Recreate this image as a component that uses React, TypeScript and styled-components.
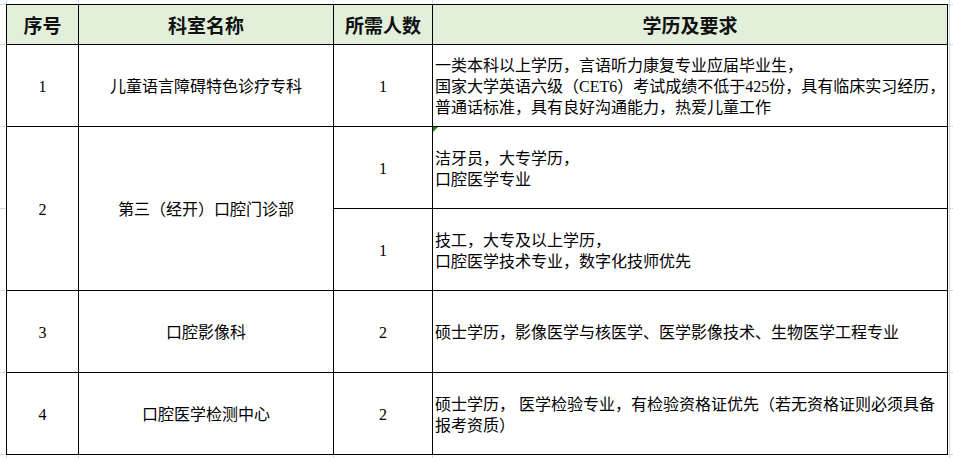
import React from 'react'
import styled, { createGlobalStyle } from 'styled-components'

const GlobalStyle = createGlobalStyle`
  html, body {
    margin: 0;
    padding: 0;
    background: #ffffff;
  }
`

const GRID = '#d0d7e5'
const hLines = [4, 44, 126, 208, 290, 372, 454]
const vLines = [6, 78, 333, 432, 949]

// faint spreadsheet gridlines that show around the bordered table
const sheetBackground = [
  ...hLines.map(y => `linear-gradient(${GRID}, ${GRID}) 0 ${y}px / 100% 1px no-repeat`),
  ...vLines.map(x => `linear-gradient(${GRID}, ${GRID}) ${x}px 0 / 1px 100% no-repeat`),
].join(', ')

const Sheet = styled.div`
  width: 953px;
  height: 458px;
  box-sizing: border-box;
  padding: 4px 0 0 6px;
  background: ${sheetBackground};
  overflow: hidden;
`

const Table = styled.div`
  display: grid;
  grid-template-columns: 71px 254px 98px 514px;
  grid-template-rows: 39px repeat(5, 81px);
  gap: 1px;
  width: fit-content;
  background: #000000;
  border: 1px solid #000000;
`

const HeadCell = styled.div`
  display: flex;
  align-items: center;
  justify-content: center;
  background: #e2efda;
  color: #111111;
  font-family: "Noto Sans CJK SC", sans-serif;
  font-weight: 700;
  font-size: 19px;
  padding-bottom: 1px;
`

const Cell = styled.div<{ $rows?: number; $left?: boolean }>`
  position: relative;
  display: flex;
  flex-direction: column;
  justify-content: center;
  align-items: ${p => (p.$left ? 'flex-start' : 'center')};
  grid-row: span ${p => p.$rows ?? 1};
  background: #ffffff;
  color: #000000;
  font-family: "Liberation Serif", "Noto Sans CJK SC", serif;
  font-size: 16px;
  line-height: 21px;
  padding: ${p => (p.$left ? '2px 0 0 2px' : '2px 0 0 0')};
`

const Line = styled.span`
  display: block;
  white-space: nowrap;
`

const Marker = styled.span`
  position: absolute;
  top: 0;
  left: 0;
  width: 0;
  height: 0;
  border-top: 5px solid #1f8a1f;
  border-right: 5px solid transparent;
`

type Post = { count: number; lines: string[]; marker?: boolean }
type Dept = { no: number; name: string; posts: Post[] }

const depts: Dept[] = [
  {
    no: 1,
    name: '儿童语言障碍特色诊疗专科',
    posts: [
      {
        count: 1,
        lines: [
          '一类本科以上学历，言语听力康复专业应届毕业生，',
          '国家大学英语六级（CET6）考试成绩不低于425份，具有临床实习经历，',
          '普通话标准，具有良好沟通能力，热爱儿童工作',
        ],
      },
    ],
  },
  {
    no: 2,
    name: '第三（经开）口腔门诊部',
    posts: [
      { count: 1, lines: ['洁牙员，大专学历，', '口腔医学专业'], marker: true },
      { count: 1, lines: ['技工，大专及以上学历，', '口腔医学技术专业，数字化技师优先'] },
    ],
  },
  {
    no: 3,
    name: '口腔影像科',
    posts: [{ count: 2, lines: ['硕士学历，影像医学与核医学、医学影像技术、生物医学工程专业'] }],
  },
  {
    no: 4,
    name: '口腔医学检测中心',
    posts: [
      {
        count: 2,
        lines: ['硕士学历， 医学检验专业，有检验资格证优先（若无资格证则必须具备', '报考资质）'],
      },
    ],
  },
]

export default function App() {
  return (
    <>
      <GlobalStyle />
      <Sheet>
        <Table>
          <HeadCell>序号</HeadCell>
          <HeadCell>科室名称</HeadCell>
          <HeadCell>所需人数</HeadCell>
          <HeadCell>学历及要求</HeadCell>
          {depts.map(d =>
            d.posts.map((p, i) => (
              <React.Fragment key={`${d.no}-${i}`}>
                {i === 0 && <Cell $rows={d.posts.length}>{d.no}</Cell>}
                {i === 0 && <Cell $rows={d.posts.length}>{d.name}</Cell>}
                <Cell>{p.count}</Cell>
                <Cell $left>
                  {p.marker && <Marker />}
                  {p.lines.map(l => (
                    <Line key={l}>{l}</Line>
                  ))}
                </Cell>
              </React.Fragment>
            ))
          )}
        </Table>
      </Sheet>
    </>
  )
}
